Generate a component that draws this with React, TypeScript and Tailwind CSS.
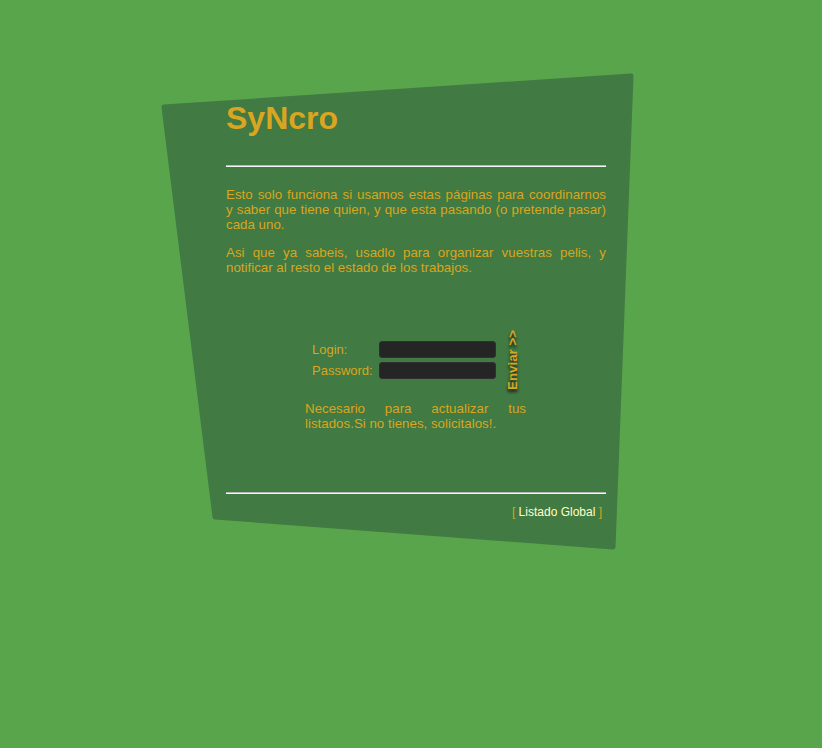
import React from "react";

export default function App() {
  return (
    <div className="relative w-full h-[748px] overflow-hidden bg-[#58a54c] font-['Liberation_Sans',Arial,sans-serif]">
      <svg
        className="absolute left-0 top-0"
        width="822"
        height="748"
        viewBox="0 0 822 748"
      >
        <polygon
          points="164,107 631,76 613,547 215,517"
          fill="#417a42"
          stroke="#417a42"
          strokeWidth="5"
          strokeLinejoin="round"
        />
      </svg>

      <div className="relative ml-[226px] w-[380px] pt-[102px] text-[#daa520]">
        <h1 className="text-[32px] leading-[32px] font-bold">SyNcro</h1>

        <div className="mt-[31px] border-t border-t-[#b8b8b8] border-b border-b-[#f4f4f4]" />

        <p className="mt-[20px] text-[13.33px] leading-[15px] text-justify">
          Esto solo funciona si usamos estas páginas para coordinarnos y saber
          que tiene quien, y que esta pasando (o pretende pasar) cada uno.
        </p>
        <p className="mt-[13px] text-[13.33px] leading-[15px] text-justify">
          Asi que ya sabeis, usadlo para organizar vuestras pelis, y notificar
          al resto el estado de los trabajos.
        </p>

        <div className="ml-[79px] w-[221px] mt-[54px]">
          <div className="flex items-center h-[62px]">
            <div className="ml-[7px] grid grid-cols-[67px_117px] gap-y-[4px] text-[13px] leading-[17px]">
              <label>Login:</label>
              <input
                type="text"
                className="h-[17px] w-[117px] rounded-[3px] bg-[#252525] border border-[#303030] outline-none"
              />
              <label>Password:</label>
              <input
                type="password"
                className="h-[17px] w-[117px] rounded-[3px] bg-[#252525] border border-[#303030] outline-none"
              />
            </div>
            <button
              type="button"
              className="ml-[10px] h-[62px] w-[14px] [writing-mode:vertical-rl] rotate-180 text-[13.33px] leading-[14px] font-bold text-[#daa520] [text-shadow:-3px_0_3px_#1a1a1a] flex items-center justify-center"
            >
              Enviar &gt;&gt;
            </button>
          </div>
          <p className="mt-[10px] text-[13.33px] leading-[15px] text-justify">
            Necesario para actualizar tus listados.Si no tienes, solicitalos!.
          </p>
        </div>

        <div className="mt-[61px] border-t border-t-[#b8b8b8] border-b border-b-[#f4f4f4]" />

        <div className="mt-[11px] pr-[4px] text-right text-[12px] leading-[14px]">
          <span className="text-[#daa520]">[ </span>
          <span className="text-[#ffffc8]">Listado Global</span>
          <span className="text-[#daa520]"> ]</span>
        </div>
      </div>
    </div>
  );
}
